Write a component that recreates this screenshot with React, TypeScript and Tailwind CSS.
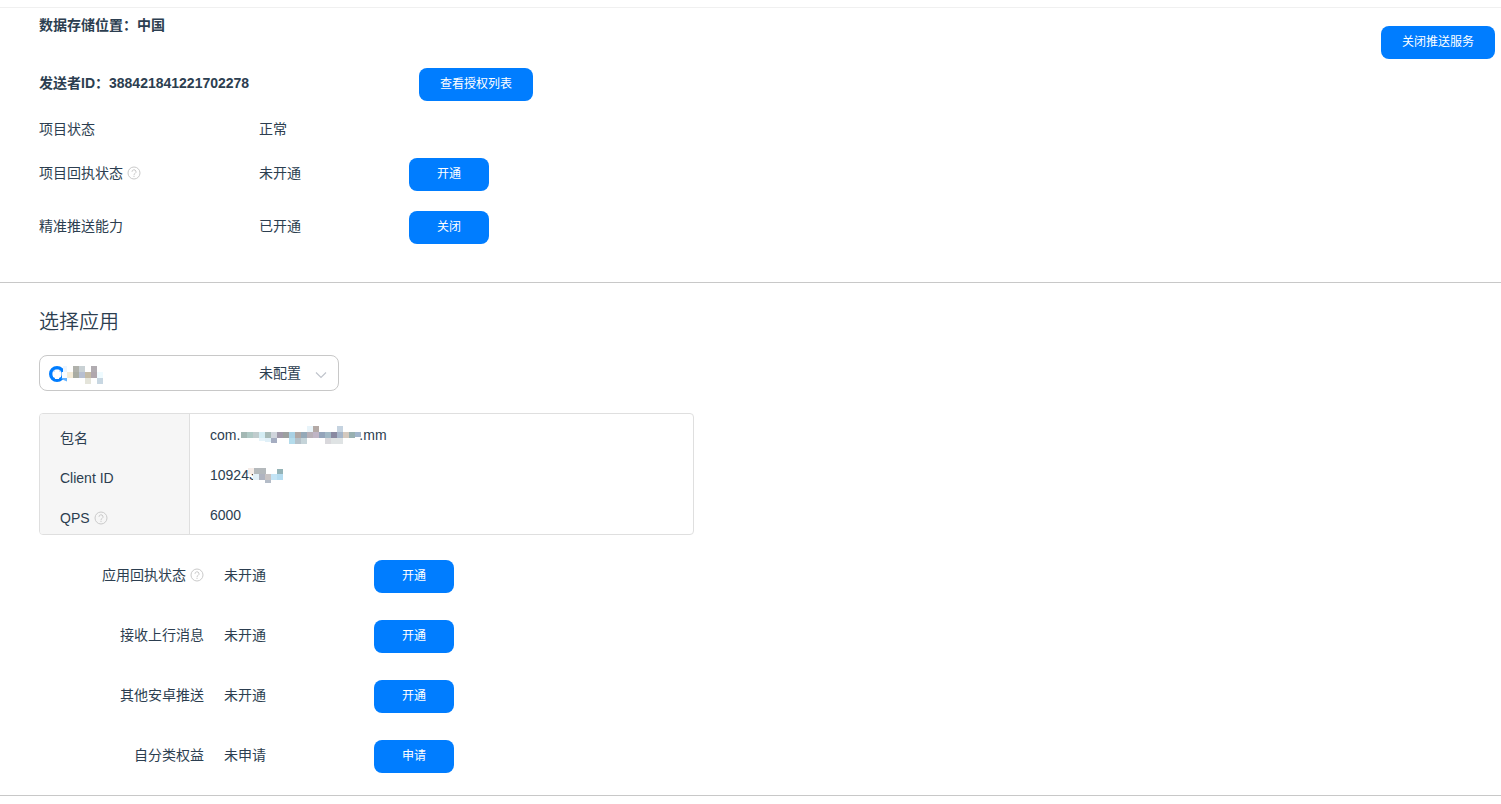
import type { ReactNode } from 'react';

type Cell = [x: number, y: number, fill: string, height?: number];

const appCells: Cell[] = [
  [25, 1, '#b0b1ab'], [31, 1, '#c9d1d4'], [43, 1, '#b1acb1'],
  [19, 7, '#f5ecd8'], [25, 7, '#a9aca3'],
  [31, 7, '#b7bfd1'], [37, 7, '#c4bba6'], [43, 7, '#b0a7ad'],
  [49, 7, '#effbff'], [37, 13, '#e4e4da'], [49, 13, '#c8d7e2'],
];

const packageCells: Cell[] = [
  [66, 0, '#e8f4fa'], [72, 0, '#b4a9a5'], [96, 0, '#c5d3e0'],
  [0, 6, '#a4b8b4'], [6, 6, '#b0c9c5'], [12, 6, '#c0cccd'], [18, 6, '#d4edf4'],
  [24, 6, '#a8bbb8'], [30, 6, '#d0d5dc'], [36, 6, '#a19aaa'], [42, 6, '#9ca09f'],
  [48, 6, '#a9d1e4'], [54, 6, '#b0a8a5'], [60, 6, '#95a9b8'], [66, 6, '#b8b0b7'],
  [72, 6, '#c0b5c5'], [78, 6, '#94a4ba'], [84, 6, '#a1b8c5'], [90, 6, '#8989a1'],
  [96, 6, '#a5b5c9'], [102, 6, '#d4c9be'], [108, 6, '#98b0b1'], [114, 6, '#a1b5cc', 5],
  [18, 12, '#e6f4fa', 3], [24, 12, '#e0f0f8', 4], [30, 12, '#a5adc1', 5],
  [48, 12, '#b4dcec'], [54, 12, '#b5c1c9'], [60, 12, '#c5d4d9'],
  [84, 12, '#d9d8dc'], [90, 12, '#dfe3e4'], [96, 12, '#dfe3e4'],
];

const clientCells: Cell[] = [
  [0, 0, '#f5ece8'], [6, 0, '#b4b9bc'], [12, 0, '#b4b9bc'], [29, 1, '#94b3b7', 5],
  [5, 6, '#e4f0f8'], [11, 6, '#b0b4c0'], [17, 6, '#c9c4c4'],
  [23, 6, '#c4e4f5'], [29, 6, '#b5dcf0'], [17, 12, '#b4bcc8', 3],
];

function Cells({ cells }: { cells: Cell[] }) {
  return (
    <g shapeRendering="crispEdges">
      {cells.map(([x, y, fill, height = 6], i) => (
        <rect key={i} x={x} y={y} width={6} height={height} fill={fill} />
      ))}
    </g>
  );
}

function HelpIcon() {
  return (
    <svg
      className="inline-block size-3.5 shrink-0"
      viewBox="0 0 14 14"
      fill="none"
      stroke="#cacaca"
      role="img"
      aria-label="帮助"
    >
      <circle cx="7" cy="7" r="6" />
      <path d="M5 5.8a2 2 0 1 1 3 1.7c-.7.4-1 .8-1 1.6" />
      <path d="M7 9.8v1.2" />
    </svg>
  );
}

function Button({ children, wide = false }: { children: ReactNode; wide?: boolean }) {
  return (
    <button
      type="button"
      className={`h-[33px] shrink-0 cursor-pointer rounded-lg bg-[#007dff] pb-0.5 text-xs text-white hover:bg-[#006be0] ${
        wide ? 'w-[114px]' : 'w-20'
      }`}
    >
      {children}
    </button>
  );
}

function Label({ text, help }: { text: string; help?: boolean }) {
  return (
    <span className="inline-flex items-center gap-1">
      {text}
      {help && <HelpIcon />}
    </span>
  );
}

const appSettings = [
  { label: '应用回执状态', help: true, value: '未开通', action: '开通' },
  { label: '接收上行消息', value: '未开通', action: '开通' },
  { label: '其他安卓推送', value: '未开通', action: '开通' },
  { label: '自分类权益', value: '未申请', action: '申请' },
];

export default function App() {
  return (
    <main className="bg-white pt-[7px] font-['Liberation_Sans','Noto_Sans_CJK_SC',sans-serif] text-sm leading-5 text-[#2c3e50]">
      <section className="flex items-start justify-between border-t border-b border-t-[#f0f0f0] border-b-[#c8c8c8] pt-[7px] pr-1.5 pb-[38px] pl-[39px]">
        <div>
          <p className="font-bold">数据存储位置：中国</p>
          <div className="mt-[33px] flex items-start">
            <p className="w-[380px] pt-[5px] font-bold">发送者ID：388421841221702278</p>
            <Button wide>查看授权列表</Button>
          </div>
          <div className="mt-[18px] flex">
            <div className="w-[220px]">项目状态</div>
            <div className="w-[150px]">正常</div>
          </div>
          <div className="mt-[19px] flex items-start">
            <div className="w-[220px] pt-[5px]">
              <Label text="项目回执状态" help />
            </div>
            <div className="w-[150px] pt-[5px]">未开通</div>
            <Button>开通</Button>
          </div>
          <div className="mt-5 flex items-start">
            <div className="w-[220px] pt-[5px]">精准推送能力</div>
            <div className="w-[150px] pt-[5px]">已开通</div>
            <Button>关闭</Button>
          </div>
        </div>
        <div className="pt-[11px]">
          <Button wide>关闭推送服务</Button>
        </div>
      </section>

      <section className="border-b border-[#c8c8c8] pt-[25px] pb-[22px] pl-[39px]">
        <h2 className="text-xl leading-7 font-[350]">
          <label htmlFor="app-select">选择应用</label>
        </h2>

        <div className="relative mt-[19px] w-[300px]">
          <select
            id="app-select"
            className="block h-9 w-full appearance-none rounded-lg border border-[#c8c8c8] bg-white pr-9 pl-[219px] text-sm"
          >
            <option>未配置</option>
          </select>
          <svg
            className="pointer-events-none absolute top-2.5 left-[9px] h-5 w-14"
            viewBox="0 0 56 20"
            aria-hidden="true"
          >
            <circle cx="9" cy="9" r="6.4" fill="#cfe4ff" stroke="#007dff" strokeWidth="3.2" />
            <path d="M7 5h4v2h2v5h-2v2H7v-2H5V7h2z" fill="#fff" />
            <path d="M14 7h5v6h-5z" fill="#fbfdff" />
            <path d="M15 1h4v6h-4z" fill="#edf6ff" />
            <path d="M13 13h6v3.5l-3.5-1.5z" fill="#62b2ff" />
            <Cells cells={appCells} />
          </svg>
          <svg
            className="pointer-events-none absolute top-4 right-3 h-2 w-3"
            viewBox="0 0 12 8"
            fill="none"
            stroke="#c0c4cc"
            strokeWidth="1.2"
            aria-hidden="true"
          >
            <path d="M1 1.5l5 5 5-5" />
          </svg>
        </div>

        <table className="mt-[22px] w-[655px] max-w-full border-separate border-spacing-0 overflow-hidden rounded border border-[#dfdfdf] text-left">
          <tbody>
            <tr className="h-10 align-top">
              <th scope="row" className="w-[150px] border-r border-[#dfdfdf] bg-[#f6f6f6] pt-3.5 pl-5 font-normal">
                包名
              </th>
              <td className="pt-[11px] pl-5">
                <span className="flex">
                  com.
                  <svg className="mt-px -mr-0.5 ml-px h-[18px] w-[120px]" viewBox="0 0 120 18" aria-hidden="true">
                    <Cells cells={packageCells} />
                  </svg>
                  .mm
                </span>
              </td>
            </tr>
            <tr className="h-10 align-top">
              <th scope="row" className="border-r border-[#dfdfdf] bg-[#f6f6f6] pt-3.5 pl-5 font-normal">
                Client ID
              </th>
              <td className="pt-[11px] pl-5">
                <span className="flex">
                  109243
                  <svg className="mt-[3px] -ml-[9px] h-[15px] w-[35px]" viewBox="0 0 35 15" aria-hidden="true">
                    <Cells cells={clientCells} />
                  </svg>
                </span>
              </td>
            </tr>
            <tr className="h-10 align-top">
              <th scope="row" className="border-r border-[#dfdfdf] bg-[#f6f6f6] pt-3.5 pl-5 font-normal">
                <Label text="QPS" help />
              </th>
              <td className="pt-[11px] pl-5">6000</td>
            </tr>
          </tbody>
        </table>

        <div className="mt-[25px] flex flex-col gap-[27px]">
          {appSettings.map((s) => (
            <div key={s.label} className="flex items-start">
              <div className="w-[165px] pt-[5px] text-right">
                <Label text={s.label} help={s.help} />
              </div>
              <div className="ml-5 w-[150px] pt-[5px]">{s.value}</div>
              <Button>{s.action}</Button>
            </div>
          ))}
        </div>
      </section>
    </main>
  );
}
